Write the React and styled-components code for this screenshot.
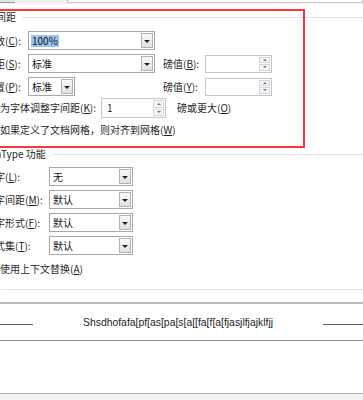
import React from "react";
import styled, { createGlobalStyle } from "styled-components";

const GlobalStyle = createGlobalStyle`
  html, body { margin: 0; padding: 0; background: #fff; }
  body {
    font-family: "Noto Sans CJK SC", "Noto Sans", sans-serif;
    font-size: 10px;
    color: #1f1f1f;
  }
`;

const Page = styled.div`
  position: relative;
  width: 363px;
  height: 400px;
  overflow: hidden;
  background: #fff;
  display: flex;
  flex-direction: column;
`;

const TopStrip = styled.div`
  height: 4px;
  flex-shrink: 0;
  display: flex;
  background: #f1f1f1;
`;

const TopButton = styled.div`
  width: 15px;
  height: 2px;
  background: #e3e3e3;
  border-bottom: 1px solid #9a9a9a;
`;

const TopField = styled.div`
  margin-left: 52px;
  flex: 1;
  height: 2px;
  background: #fff;
  border: 1px solid #c6c6c6;
  border-top: none;
`;

const Body = styled.div`
  margin-left: -24px;
  width: 404px;
  flex: 1;
  display: flex;
  flex-direction: column;
`;

const Heading = styled.div`
  display: flex;
  align-items: center;
  gap: 6px;
  height: 14px;
  margin-top: ${(p) => p.$mt}px;
  flex-shrink: 0;
`;

const HeadingText = styled.span`
  white-space: nowrap;
  line-height: 14px;
  color: #1f1f1f;
`;

const Rule = styled.div`
  flex: 1;
  height: 1px;
  background: #dfe4ea;
`;

const Row = styled.div`
  display: flex;
  align-items: center;
  height: ${(p) => p.$h}px;
  margin-top: ${(p) => p.$mt || 0}px;
  padding-left: 9px;
  flex-shrink: 0;
`;

const Label = styled.span`
  width: ${(p) => p.$w}px;
  flex-shrink: 0;
  white-space: nowrap;
  line-height: 14px;
  margin-left: ${(p) => p.$ml || 0}px;
`;

const Key = styled.u`
  text-decoration: underline;
  text-underline-offset: 1px;
`;

const Slot = styled.div`
  width: ${(p) => p.$w}px;
  flex-shrink: 0;
  display: flex;
`;

const Combo = styled.div`
  width: ${(p) => p.$w}px;
  height: 19px;
  box-sizing: border-box;
  border: 1px solid #a7a7a7;
  background: #fff;
  display: flex;
  align-items: center;
  padding-left: 2px;
  flex-shrink: 0;
`;

const ComboText = styled.span`
  line-height: 12px;
  padding: 0 1px;
  background: ${(p) => (p.$selected ? "#99c4f0" : "transparent")};
  color: #111;
`;

const DropBtn = styled.div`
  margin-left: auto;
  margin-right: 1px;
  width: 12px;
  height: 15px;
  box-sizing: border-box;
  border: 1px solid #b2b2b2;
  background: linear-gradient(#fafafa, #e1e1e1);
  display: flex;
  align-items: center;
  justify-content: center;
  &::after {
    content: "";
    width: 0;
    height: 0;
    border-left: 3px solid transparent;
    border-right: 3px solid transparent;
    border-top: 3px solid #222;
    margin-top: 1px;
  }
`;

const Spin = styled.div`
  width: ${(p) => p.$w}px;
  height: ${(p) => p.$h}px;
  box-sizing: border-box;
  border: 1px solid #c6c6c6;
  background: #fff;
  display: flex;
  align-items: center;
  flex-shrink: 0;
`;

const SpinText = styled.span`
  flex: 1;
  padding-left: 5px;
  line-height: 12px;
`;

const SpinArrows = styled.div`
  width: 12px;
  height: 100%;
  box-sizing: border-box;
  padding: 1px 1px 1px 0;
  display: flex;
  flex-direction: column;
  gap: 1px;
`;

const SpinBtn = styled.div`
  flex: 1;
  border: 1px solid #d6d6d6;
  background: #f5f5f5;
  display: flex;
  align-items: center;
  justify-content: center;
  &::after {
    content: "";
    width: 0;
    height: 0;
    border-left: 2.5px solid transparent;
    border-right: 2.5px solid transparent;
    ${(p) =>
      p.$up
        ? "border-bottom: 2.5px solid #5a78b6;"
        : "border-top: 2.5px solid #5a78b6;"}
  }
`;

const Checkbox = styled.span`
  width: 13px;
  height: 13px;
  box-sizing: border-box;
  border: 1px solid #8f8f8f;
  background: #fff;
  flex-shrink: 0;
  margin-right: 2px;
`;

const PreviewBox = styled.div`
  margin-top: 6px;
  height: 36px;
  border-top: 2px solid #b9b9b9;
  border-bottom: 1px solid #8c8c8c;
  display: flex;
  align-items: center;
  flex-shrink: 0;
`;

const PreviewLine = styled.div`
  flex: 1;
  height: 1px;
  background: #5e5e5e;
  margin-top: 4px;
`;

const PreviewText = styled.span`
  font-family: "Liberation Sans", Arial, sans-serif;
  font-size: 10.4px;
  margin: 0 50px;
  white-space: nowrap;
  color: #222;
`;

const Footer = styled.div`
  margin-top: auto;
  height: 6px;
  border-top: 1px solid #ababab;
  background: #f0f0f0;
  margin-left: 24px;
  flex-shrink: 0;
`;

const RedFrame = styled.div`
  position: absolute;
  left: -10px;
  top: 9px;
  width: 315px;
  height: 139px;
  box-sizing: border-box;
  border: 2px solid #ff3535;
  pointer-events: none;
`;

function DropCombo({ w, text, selected }) {
  return (
    <Combo $w={w}>
      <ComboText $selected={selected}>{text}</ComboText>
      <DropBtn />
    </Combo>
  );
}

function SpinBox({ w, h, text }) {
  return (
    <Spin $w={w} $h={h}>
      <SpinText>{text}</SpinText>
      <SpinArrows>
        <SpinBtn $up />
        <SpinBtn />
      </SpinArrows>
    </Spin>
  );
}

const otRows = [
  { label: "连字", key: "L", value: "无" },
  { label: "数字间距", key: "M", value: "默认" },
  { label: "数字形式", key: "F", value: "默认" },
  { label: "样式集", key: "T", value: "默认" },
];

export default function App() {
  return (
    <>
      <GlobalStyle />
      <Page>
        <TopStrip>
          <TopButton />
          <TopField />
        </TopStrip>
        <Body>
          <Heading $mt={6}>
            <HeadingText>字符间距</HeadingText>
            <Rule />
          </Heading>

          <Row $h={23} $mt={5}>
            <Label $w={43}>
              缩放(<Key>C</Key>):
            </Label>
            <DropCombo w={127} text="100%" selected />
          </Row>

          <Row $h={23}>
            <Label $w={43}>
              间距(<Key>S</Key>):
            </Label>
            <Slot $w={127}>
              <DropCombo w={127} text="标准" />
            </Slot>
            <Label $w={42} $ml={8}>
              磅值(<Key>B</Key>):
            </Label>
            <SpinBox w={67} h={18} text="" />
          </Row>

          <Row $h={23}>
            <Label $w={43}>
              位置(<Key>P</Key>):
            </Label>
            <Slot $w={127}>
              <DropCombo w={47} text="标准" />
            </Slot>
            <Label $w={42} $ml={8}>
              磅值(<Key>Y</Key>):
            </Label>
            <SpinBox w={67} h={18} text="" />
          </Row>

          <Row $h={20}>
            <Checkbox />
            <Label $w={101}>
              为字体调整字间距(<Key>K</Key>):
            </Label>
            <SpinBox w={65} h={20} text="1" />
            <Label $w={60} $ml={11}>
              磅或更大(<Key>O</Key>)
            </Label>
          </Row>

          <Row $h={24}>
            <Checkbox />
            <Label $w={200}>
              如果定义了文档网格，则对齐到网格(<Key>W</Key>)
            </Label>
          </Row>

          <Heading $mt={5}>
            <HeadingText>OpenType 功能</HeadingText>
            <Rule />
          </Heading>

          {otRows.map((r, i) => (
            <Row key={r.key} $h={23} $mt={i === 0 ? 4 : 0}>
              <Label $w={64}>
                {r.label}(<Key>{r.key}</Key>):
              </Label>
              <DropCombo w={84} text={r.value} />
            </Row>
          ))}

          <Row $h={24}>
            <Checkbox />
            <Label $w={200}>
              使用上下文替换(<Key>A</Key>)
            </Label>
          </Row>

          <Heading $mt={1}>
            <HeadingText>预览</HeadingText>
            <Rule />
          </Heading>

          <PreviewBox>
            <PreviewLine />
            <PreviewText>Shsdhofafa[pf[as[pa[s[a[[fa[f[a[fjasjlfjajklfjj</PreviewText>
            <PreviewLine />
          </PreviewBox>

          <Footer />
        </Body>
        <RedFrame />
      </Page>
    </>
  );
}
